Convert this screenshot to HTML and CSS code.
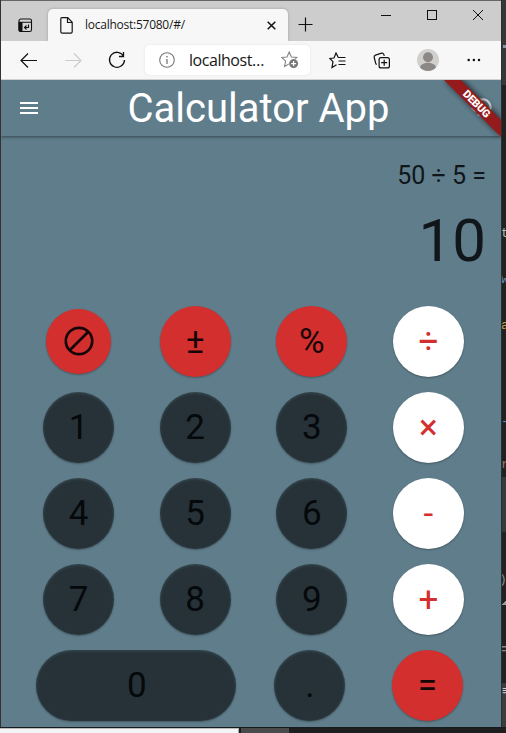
FILE: index.html
```
<!DOCTYPE html>
<html lang="en">
<head>
<meta charset="utf-8">
<title>Calculator App</title>
<link rel="stylesheet" href="styles.css">
</head>
<body>
<div class="desktop">
  <div class="edge-left"></div>
  <div class="browser">
    <div class="tabbar">
      <svg class="tab-actions" width="15" height="15" viewBox="0 0 15 15"><rect x="1" y="1" width="12.500" height="12.500" rx="1.800" fill="#d6d6d6" stroke="#111" stroke-width="1.100"/><path d="M.5 4h4v10H2.500a2 2 0 0 1-2-2z" fill="#111"/><path d="M1 4.300h12.500M10.500 6.500v3H6.800M8.500 7.500l-2 2 2 2" fill="none" stroke="#111" stroke-width="1.100"/></svg>
      <div class="tab">
        <svg width="13" height="17" viewBox="0 0 13 17"><path d="M2 .7h5.700l4.500 4.600v9.500a1.300 1.300 0 0 1-1.300 1.300H2A1.300 1.300 0 0 1 .8 14.800V2A1.300 1.300 0 0 1 2 .7zM7.500 1v4.500H12" fill="none" stroke="#161616" stroke-width="1.200"/></svg>
        <span class="tab-title">localhost:57080/#/</span>
        <svg class="tab-close" width="9" height="9" viewBox="0 0 9 9"><path d="M.7.7l7.600 7.600M8.300.7L.7 8.300" stroke="#111" stroke-width="1.500"/></svg>
      </div>
      <svg class="new-tab" width="15" height="15" viewBox="0 0 15 15"><path d="M7.500.5v14M.5 7.500h14" stroke="#111" stroke-width="1.200"/></svg>
      <div class="window-controls">
        <svg width="10" height="10" viewBox="0 0 10 10"><path d="M0 5.500h10" stroke="#111"/></svg>
        <svg width="10" height="10" viewBox="0 0 10 10"><rect x=".5" y=".5" width="9" height="9" fill="none" stroke="#111"/></svg>
        <svg width="10" height="10" viewBox="0 0 10 10"><path d="M0 0l10 10M10 0L0 10" stroke="#111"/></svg>
      </div>
    </div>
    <div class="toolbar">
      <svg class="back" width="17" height="15" viewBox="0 0 17 15"><path d="M8 .5l-7 7 7 7M1 7.500h16" fill="none" stroke="#111" stroke-width="1.200"/></svg>
      <svg class="forward" width="17" height="15" viewBox="0 0 17 15"><path d="M9 .5l7 7-7 7M16 7.500H0" fill="none" stroke="#ccc" stroke-width="1.200"/></svg>
      <svg class="reload" width="18" height="18" viewBox="0 0 18 18"><path d="M15.500 5A7.500 7.500 0 1 0 16.500 9M15.500 1v4.500H11" fill="none" stroke="#111" stroke-width="1.300"/></svg>
      <div class="address">
        <svg width="16" height="16" viewBox="0 0 16 16"><circle cx="8" cy="8" r="7.300" fill="none" stroke="#777" stroke-width="1.100"/><path d="M8 7v5M8 4v1.500" stroke="#777" stroke-width="1.300"/></svg>
        <span>localhost…</span>
        <svg class="favorite" width="18" height="18" viewBox="0 0 18 18"><path d="M8.200 1l2.200 5 5.400.5-4 3.700 1 5.300-4.600-2.700-4.600 2.700 1-5.300L.7 6.500 6 6z" fill="none" stroke="#858585" stroke-width="1.100"/><circle cx="12.600" cy="12.600" r="5" fill="#fff"/><circle cx="12.600" cy="12.600" r="4.500" fill="#777"/><path d="M12.600 10.100v5M10.100 12.600h5" stroke="#fff" stroke-width="1.200"/></svg>
      </div>
      <svg class="favorites" width="17" height="17" viewBox="0 0 17 17"><path d="M9 4.800L7 1 5 6 .8 6.500 4 9.700 3 15.500l4.500-2.700M7 1l2.300 4.500" fill="none" stroke="#111" stroke-width="1.200"/><path d="M9 5.500h7.500M9.500 9h7M9.500 12.500h7" stroke="#111" stroke-width="1.200"/></svg>
      <svg class="collections" width="18" height="17" viewBox="0 0 18 17"><rect x="6.100" y="5.600" width="10.300" height="10.300" rx="2" fill="none" stroke="#111" stroke-width="1.200"/><path d="M11.200 7.700v6M8.200 10.700h6M3.500 12.800L2.600 11 1.200 5.500a2 2 0 0 1 1.300-2.400L8.500 1.200a2 2 0 0 1 2.300 1.200l.5 1.500" fill="none" stroke="#111" stroke-width="1.200"/></svg>
      <svg class="profile" width="22" height="22" viewBox="0 0 22 22"><circle cx="11" cy="11" r="11" fill="#d2d0ce"/><circle cx="11" cy="8.300" r="5" fill="#8c8885"/><path d="M3 18.500c1.500-6.200 14.500-6.200 16 0A11 11 0 0 1 3 18.500z" fill="#8c8885"/></svg>
      <svg class="more" width="14" height="4" viewBox="0 0 14 4"><g fill="#111"><circle cx="1.700" cy="2" r="1.250"/><circle cx="6.900" cy="2" r="1.250"/><circle cx="12" cy="2" r="1.250"/></g></svg>
    </div>
    <main class="app">
      <header class="appbar">
        <svg class="menu" width="18" height="12" viewBox="0 0 18 12"><path d="M0 1h18M0 6h18M0 11h18" stroke="#fff" stroke-width="2"/></svg>
        <h1>Calculator App</h1>
        <svg class="history" width="21" height="20" viewBox="0 0 21 20"><path d="M3.500 10A8 8 0 1 1 7 16" fill="none" stroke="#fff" stroke-width="2.200"/><path d="M0 10h8l-4 4z" fill="#fff"/></svg>
      </header>
      <section class="display">
        <div class="expression">50 ÷ 5 =</div>
        <div class="result">10</div>
      </section>
      <section class="keys">
        <button class="key red clear"><svg width="30" height="30" viewBox="0 0 30 30"><circle cx="15" cy="15" r="13.200" fill="none" stroke="#150505" stroke-width="2.700"/><path d="M5.700 24.300L24.300 5.700" stroke="#150505" stroke-width="2.700"/></svg></button>
        <button class="key red">±</button>
        <button class="key red">%</button>
        <button class="key white">÷</button>
        <button class="key">1</button>
        <button class="key">2</button>
        <button class="key">3</button>
        <button class="key white">×</button>
        <button class="key">4</button>
        <button class="key">5</button>
        <button class="key">6</button>
        <button class="key white">-</button>
        <button class="key">7</button>
        <button class="key">8</button>
        <button class="key">9</button>
        <button class="key white">+</button>
      </section>
      <section class="last-row">
        <button class="key zero">0</button>
        <button class="key">.</button>
        <button class="key red">=</button>
      </section>
      <svg class="debug" width="60" height="60" viewBox="0 0 60 60">
        <defs><filter id="soft" x="-30%" y="-30%" width="160%" height="160%"><feGaussianBlur stdDeviation="3"/></filter></defs>
        <path d="M4 0H21L60 39V56z" fill="#000" opacity=".75" filter="url(#soft)"/>
        <path d="M3 0H20L60 40V57z" fill="#951a1c"/>
        <text x="35.500" y="24" transform="rotate(45 35.500 24)" text-anchor="middle" dominant-baseline="central">DEBUG</text>
      </svg>
    </main>
  </div>
  <aside class="editor">
    <div class="editor-top"><i></i></div>
    <div class="code first">t</div>
    <div class="code blue">w</div>
    <div class="code gold">a</div>
    <div class="code dash">-</div>
    <div class="code brown">r</div>
    <div class="panel"></div>
    <div class="console"><span>)</span><i></i><b>=</b></div>
    <div class="console-foot">≡</div>
  </aside>
</div>
<footer class="taskbar"><div class="search"></div><div class="task"></div></footer>
</body>
</html>
```

FILE: styles.css
```
* { box-sizing: border-box; }
body { margin: 0; width: 506px; height: 733px; overflow: hidden; background: #202020; font-family: Roboto, sans-serif; }
svg { display: block; flex: none; }
.desktop { display: flex; height: 727px; }
.edge-left { width: 1px; background: #343033; }
.browser { width: 500px; display: flex; flex-direction: column; border-top: 1px solid #666; background: #cdcdcd; }

.tabbar { height: 40px; display: flex; background: #cdcdcd; }
.tab-actions { margin: 17px 0 0 17px; }
.tab { width: 240px; height: 32px; margin: 8px 0 0 15px; padding: 0 12px 0 12px; display: flex; align-items: center; background: #f7f7f7; border-radius: 5px 5px 0 0; box-shadow: 0 0 3px rgba(0,0,0,.23); }
.tab-title { margin-left: 12px; font: 12px/16px "Open Sans", sans-serif; letter-spacing: -.25px; color: #171717; white-space: nowrap; }
.tab-close { margin-left: auto; }
.new-tab { margin: 16px 0 0 10px; }
.window-controls { margin: 9px 18px 0 auto; display: flex; gap: 36px; }

.toolbar { height: 39px; flex: none; display: flex; align-items: center; background: #f7f7f7; border-bottom: 1px solid #cfd1d2; }
.back { margin-left: 19px; }
.forward { margin-left: 28px; }
.reload { margin-left: 26px; }
.address { width: 165px; height: 30px; margin-left: 19px; padding: 0 11px 0 14px; display: flex; align-items: center; background: #fff; border-radius: 5px; box-shadow: 0 0 3px rgba(0,0,0,.08); font: 16px/22px "Open Sans", sans-serif; color: #171717; }
.address span { margin-left: 14px; letter-spacing: -.45px; }
.favorite { margin-left: auto; }
.favorites { margin-left: 19px; }
.collections { margin-left: 27px; }
.profile { margin-left: 26px; }
.more { margin-left: 28px; }

.app { position: relative; flex: 1; background: #607d8b; overflow: hidden; }
.appbar { height: 56px; padding: 0 9px 0 19px; display: flex; align-items: center; box-shadow: 0 1px 3px rgba(0,0,0,.45); color: #fff; }
.appbar h1 { flex: 1; margin: 0; padding: 1px 0 0 8px; text-align: center; font-size: 40px; line-height: 56px; font-weight: 400; }
.history { opacity: .8; }
.debug { position: absolute; top: 0; right: 0; }
.debug text { font: 900 10.800px Roboto, sans-serif; letter-spacing: -.2px; fill: #fff; }

.display { height: 162.300px; padding: 25px 15px 0; text-align: right; color: #10161a; }
.expression { font-size: 25px; line-height: 30px; }
.result { margin-top: 15px; font-size: 60px; line-height: 70px; }

.keys { margin-left: 19.300px; width: 466px; display: grid; grid-template-columns: repeat(4, 116.600px); grid-auto-rows: 86.100px; justify-items: center; align-items: center; }
.key { width: 71px; height: 71px; padding: 0; border: 0; border-radius: 36px; display: flex; align-items: center; justify-content: center; font: 35px/41px Roboto, sans-serif; color: #05090b; background: #263238; box-shadow: inset 0 1px 3px rgba(96,125,139,.35), 0 1px 2px rgba(0,0,0,.3); }
.key.red { background: #d32f2f; color: #150505; box-shadow: 0 1px 2px rgba(0,0,0,.3); }
.key.white { background: #fff; color: #d32f2f; box-shadow: 0 1px 2px rgba(0,0,0,.3); }
.key.clear { width: 65px; height: 65px; }
.last-row { display: flex; gap: 46px; padding: 7.600px 0 0 35.300px; }
.last-row .key:nth-child(2) { margin-left: -8px; }
.last-row .key:nth-child(3) { margin-left: .5px; }
.key.zero { width: 200px; padding-left: 1px; }

.editor { width: 5px; overflow: hidden; display: flex; flex-direction: column; background: #212121; border-left: 1px solid #2b2e2c; font: 13px/18px "Liberation Mono", monospace; color: #b7b7b7; }
.editor-top { height: 85px; padding: 45px 0 0 1px; background: #373737; flex: none; }
.editor-top i { display: block; width: 3px; height: 3px; background: #8996a6; }
.code { flex: none; height: 18px; margin-left: -1px; }
.first { margin-top: 140px; }
.blue { margin-top: 28px; color: #668cb9; }
.gold { margin-top: 28px; color: #c99b4c; }
.dash { margin-top: 78px; color: #5790c7; }
.brown { margin-top: 25px; color: #977566; }
.panel { height: 55px; margin-top: 3px; background: #38393c; flex: none; }
.console { height: 151px; padding-top: 39px; flex: none; color: #888; }
.console span, .console b { display: block; margin-left: -3px; }
.console i { display: block; height: 5px; margin-top: 11px; background: linear-gradient(135deg, transparent 50%, #999 50%); }
.console b { margin-top: 36px; }
.console-foot { flex: 1; background: #3c3c3e; color: #ccc; }

.taskbar { height: 6px; display: flex; background: #1e1e1e; border-top: 1px solid #151b1e; }
.search { width: 239px; background: #f4f4f4; border-top: 1px solid #bbb; border-right: 1px solid #aaa; }
.task { width: 48px; margin-left: 2px; background: #4a4a4a; }
```
